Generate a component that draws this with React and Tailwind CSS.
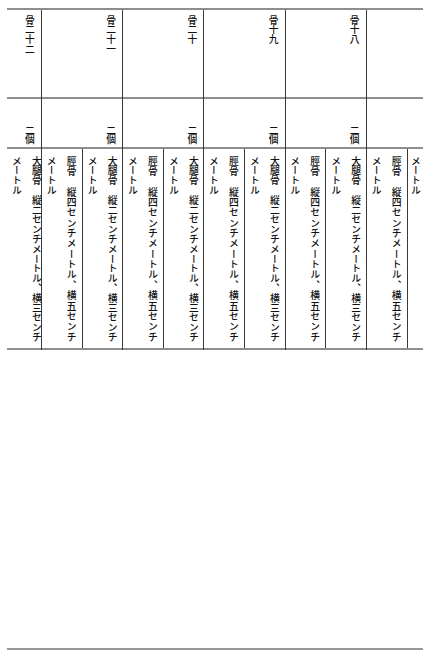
import React from "react";

const FEMUR = ["大腿骨　縦二センチメートル、横三センチ", "メートル"];
const TIBIA = ["脛骨　縦四センチメートル、横五センチ", "メートル"];

const groups = [
  { id: "g22", title: "骨二十二", count: "二個", width: "w-[35px] shrink-0", cells: [{ lines: FEMUR, cls: "flex-1" }] },
  { id: "g21", title: "骨二十一", count: "二個", width: "w-[81.2px] shrink-0", cells: [{ lines: TIBIA, tibia: true, cls: "w-[40.6px] shrink-0 border-r border-[#3a3a3a]" }, { lines: FEMUR, cls: "flex-1" }] },
  { id: "g20", title: "骨二十", count: "二個", width: "w-[81.2px] shrink-0", cells: [{ lines: TIBIA, tibia: true, cls: "w-[40.6px] shrink-0 border-r border-[#3a3a3a]" }, { lines: FEMUR, cls: "flex-1" }] },
  { id: "g19", title: "骨十九", count: "二個", width: "w-[81.2px] shrink-0", cells: [{ lines: TIBIA, tibia: true, cls: "w-[40.6px] shrink-0 border-r border-[#3a3a3a]" }, { lines: FEMUR, cls: "flex-1" }] },
  { id: "g18", title: "骨十八", count: "二個", width: "w-[81.2px] shrink-0", cells: [{ lines: TIBIA, tibia: true, cls: "w-[40.6px] shrink-0 border-r border-[#3a3a3a]" }, { lines: FEMUR, cls: "flex-1" }] },
];

const Cell = ({ lines, tibia, cls }) => (
  <div className={`flex justify-end pt-[7px] ${cls}`}>
    <div className="[writing-mode:vertical-rl] self-start leading-[20px] whitespace-nowrap">
      <div className={tibia ? "tracking-[0.55px]" : ""}>{lines[0]}</div>
      <div>{lines[1]}</div>
    </div>
  </div>
);

const Group = ({ title, count, width, cells, last }) => (
  <div className={`flex flex-col ${width} ${last ? "" : "border-r border-[#3a3a3a]"}`}>
    <div className="h-[89px] border-b-2 border-[#8e8e8e] flex justify-end pt-[5px]">
      {title && (
        <div className="[writing-mode:vertical-rl] self-start leading-[22px] whitespace-nowrap">
          {title}
        </div>
      )}
    </div>
    <div className="h-[50px] border-b-2 border-[#8e8e8e] flex justify-end items-end pb-[2px]">
      {count && (
        <div className="[writing-mode:vertical-rl] leading-[22px] whitespace-nowrap">
          {count}
        </div>
      )}
    </div>
    <div className="h-[201px] border-b-2 border-[#8e8e8e] flex">
      {cells.map((c, i) => (
        <Cell key={i} {...c} />
      ))}
    </div>
  </div>
);

export default function App() {
  return (
    <div className="w-[429px] h-[655px] bg-white text-[#111] font-medium text-[9.8px] font-['Noto_Sans_CJK_JP',sans-serif] pt-[8px] pl-[7px] pr-[6px] overflow-hidden">
      <div className="border-t-2 border-[#8e8e8e] flex">
        {groups.map((g) => (
          <Group key={g.id} {...g} />
        ))}
        <div className="flex flex-col flex-1">
          <div className="h-[89px] border-b-2 border-[#8e8e8e]"></div>
          <div className="h-[50px] border-b-2 border-[#8e8e8e]"></div>
          <div className="h-[201px] border-b-2 border-[#8e8e8e] flex">
            <Cell lines={TIBIA} tibia cls="w-[41px] shrink-0 border-r border-[#3a3a3a]" />
            <div className="flex-1 flex justify-end pt-[7px]">
              <div className="[writing-mode:vertical-rl] self-start leading-[14px] whitespace-nowrap">
                メートル
              </div>
            </div>
          </div>
        </div>
      </div>
      <div className="mt-[298px] h-[2px] bg-[#9a9a9a]"></div>
    </div>
  );
}
